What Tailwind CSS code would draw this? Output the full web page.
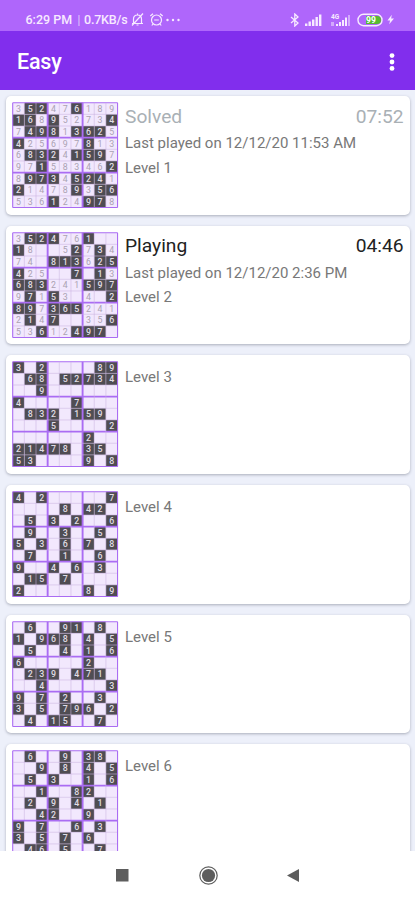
<!DOCTYPE html>
<html lang="en">
<head>
<meta charset="utf-8">
<title>Easy</title>
<script src="https://cdn.jsdelivr.net/npm/@tailwindcss/browser@4"></script>
</head>
<body class="w-[415px] h-[900px] overflow-hidden flex flex-col bg-[#edf0fa] font-['Roboto',sans-serif]">
<header class="shrink-0 text-white">
  <div class="h-[31px] bg-[#af66fb] flex items-center pt-2 pl-[25.5px] pr-[21px] text-[#f7eaff]">
    <span class="w-[103px] shrink-0 text-[12.5px] leading-[14px] font-medium whitespace-nowrap"><span class="inline-block w-[52px]">6:29 PM</span><span class="inline-block w-[6.5px] font-light">|</span><span class="tracking-[-0.2px]">0.7KB/s</span></span>
    <svg class="w-[15px] h-[15px] ml-[1px]" viewBox="0 0 15 15" fill="none" stroke="currentColor" stroke-width="1.2"><path d="M3.5 11.5V7C3.5 4.5 5 3 7.5 3S11.500 4.500 11.500 7v4.500M2 11.500h11M6.500 13h2M7.500 1.500V3M2 13.500 13 1.500"/></svg>
    <svg class="w-[15px] h-[15px] ml-[4px]" viewBox="0 0 15 15" fill="none" stroke="currentColor" stroke-width="1.200"><circle cx="7.500" cy="8" r="5"/><path d="M1.300 4 4 1.700M13.700 4 11 1.700M5.200 8h4.600M4 12l-1.200 1.500M11 12l1.200 1.500"/></svg>
    <svg class="w-[16px] h-[4px] ml-[1px]" viewBox="0 0 16 4" fill="currentColor"><circle cx="2.500" cy="2" r="1.200"/><circle cx="8" cy="2" r="1.200"/><circle cx="13.500" cy="2" r="1.200"/></svg>
    <div class="ml-auto flex items-center">
      <svg class="w-[10px] h-[14px]" viewBox="0 0 10 14" fill="none" stroke="currentColor" stroke-width="1.300"><path d="M1 4l7 6-3.200 3V1L8 4 1 10"/></svg>
      <svg class="w-[17px] h-[12px] ml-[5px]" viewBox="0 0 17 12" fill="currentColor"><path d="M0 9.500h2.400V12H0zM3.500 7.500h2.400V12H3.500zM7 5.500h2.400V12H7zM10.500 3h2.400v9h-2.400zM14 .5h2.400V12H14z"/></svg>
      <svg class="w-[21px] h-[14px] ml-[8px]" viewBox="0 0 21 14" fill="currentColor"><text x="1" y="5.500" font-size="6.500" font-weight="700">4G</text><path d="M6 11h2v2H6zM9 9h2v4H9zM12 7h2v6h-2zM15 4.500h2V13h-2z"/><path opacity=".5" d="M18 2h2v11h-2zM1 9h3v4H1z"/></svg>
      <svg class="w-[27px] h-[14px] ml-[6px]" viewBox="0 0 27 14"><rect x="1" y="1.300" width="24" height="11.400" rx="5.500" fill="none" stroke="currentColor" stroke-width="1.400"/><path d="M9 3h11a4 4 0 0 1 0 8H9z" fill="#57ba30"/><text x="9" y="10" font-size="8.500" font-weight="700" fill="#fff">99</text></svg>
      <svg class="w-[7px] h-[11px] ml-[3px]" viewBox="0 0 8 12" fill="currentColor"><path d="M5.500.5.500 7H3.500L2.500 11.500 8 4.800H4.700z"/></svg>
    </div>
  </div>
  <div class="h-[59px] bg-[#812eed] flex items-center justify-between pl-[17px] pr-[20px] pt-[3px]">
    <h1 class="text-[21.5px] leading-6 font-medium tracking-[-0.2px]">Easy</h1>
    <svg class="w-[6px] h-[18px]" viewBox="0 0 6 18" fill="currentColor"><circle cx="3" cy="2.600" r="2.400"/><circle cx="3" cy="9" r="2.400"/><circle cx="3" cy="15.400" r="2.400"/></svg>
  </div>
</header>
<main id="levels" class="flex-1 min-h-0 overflow-hidden flex flex-col gap-[11.200px] pt-[6px] pl-[6px] pr-[5px]"></main>
<nav class="h-[49px] shrink-0 bg-white flex items-center justify-center pb-[1.5px] text-[#5d5d5d]">
  <svg class="w-[200px] h-[24px]" viewBox="0 0 200 24" fill="currentColor"><rect x="8" y="6" width="12.500" height="12.500"/><circle cx="100.500" cy="12.500" r="6.600"/><circle cx="100.500" cy="12.500" r="8.700" fill="none" stroke="currentColor" stroke-width="1.200"/><path d="M179 12.500 191 6v13z"/></svg>
</nav>
<script>
// Letters a-i are given digits 1-9; numerals are entered digits; dots are empty cells.
const levels = [
  { status: 'Solved', tone: 'text-[#a9b0b5]', time: '07:52', played: 'Last played on 12/12/20 11:53 AM',
    rows: '3eb47f189 af8i5273d 7dih1cfb5 d25697h13 6hcb4aei7 97a58346b 8igc4ebd1 b1478i3ef 536a24ig8' },
  { status: 'Playing', tone: 'text-[#222222]', time: '04:46', played: 'Last played on 12/12/20 2:36 PM',
    rows: '3ebd76a.. a8..5b7c4 74.hac6be d25..g.a3 fhc241eig 9g1e3.4.b hi7cfe241 2a4g..35f 53f12dig.' },
  { rows: 'c.b....hi .fh.ebgcd ..i...... d....g... .hcb.aei. ...e....b ......b.. badgh.ce. ec....i.h' },
  { rows: 'd.b.....g ....h.db. .e.c.b..f .i..c..e. e.c.f.g.h .g..a..f. i..d.f.c. .ae.g.... b.....h.i' },
  { rows: '.f..ia.h. a.ifh.d.e .e..d.a.f f.....b.. .bci.dga. ..d.....c i.g.b..c. c.e.gif.b .d.ae..g.' },
  { rows: '.f..i.ch. ..i.h.d.e .e.c..a.f ..a..hb.. .b.i.d.a. ..db..i.. i.g..f.c. c.e.g.f.. .df.e..g.' },
];
const C = 11.65;
function board(rows) {
  let cells = '', digits = '', lines = '';
  rows.split(' ').forEach((row, r) => [...row].forEach((ch, c) => {
    const given = /[a-i]/.test(ch);
    const x = 0.7 + c * C, y = 0.7 + r * C;
    cells += `<rect x="${x}" y="${y}" width="${C}" height="${C}" fill="${given ? '#4f4d53' : '#f2e8fd'}"/>`;
    if (ch !== '.') digits += `<text x="${x + C / 2}" y="${y + 9}" text-anchor="middle" font-size="8.800" font-weight="${given ? 500 : 400}" fill="${given ? '#e0dde4' : '#aaa2b2'}">${given ? ch.charCodeAt(0) - 96 : ch}</text>`;
  }));
  for (let i = 0; i < 10; i++) {
    const p = 0.7 + i * C, e = 0.7 + 9 * C, major = i % 3 === 0;
    const inner = i === 3 || i === 6;
    lines += `<path d="M${p} 0.700V${e}M0.700 ${p}H${e}" stroke="${major ? '#aa6cf3' : '#c9b2e2'}" stroke-opacity="${major ? 1 : .7}" stroke-width="${inner ? 1.9 : major ? 1.1 : .8}"/>`;
  }
  return `<svg class="w-[107px] h-[107px] shrink-0" viewBox="0 0 107 107">${cells}${lines}${digits}</svg>`;
}
document.getElementById('levels').innerHTML = levels.map((l, i) => `
<article class="h-[118.500px] shrink-0 rounded-[5px] bg-white flex gap-[6px] pt-[6px] pl-[6px] pr-[6.500px] shadow-[0_1px_3px_rgba(60,65,85,0.38)]">
  ${board(l.rows)}
  <div class="flex-1 min-w-0 text-[15px] leading-[24.700px] text-[#787878] ${l.status ? 'pt-[1.500px]' : 'pt-[4px]'}">
    ${l.status ? `<div class="flex justify-between mb-[1.500px] text-[19.200px] leading-[26px] ${l.tone}"><span>${l.status}</span><span>${l.time}</span></div><p>${l.played}</p>` : ''}
    <p>Level ${i + 1}</p>
  </div>
</article>`).join('');
</script>
</body>
</html>
